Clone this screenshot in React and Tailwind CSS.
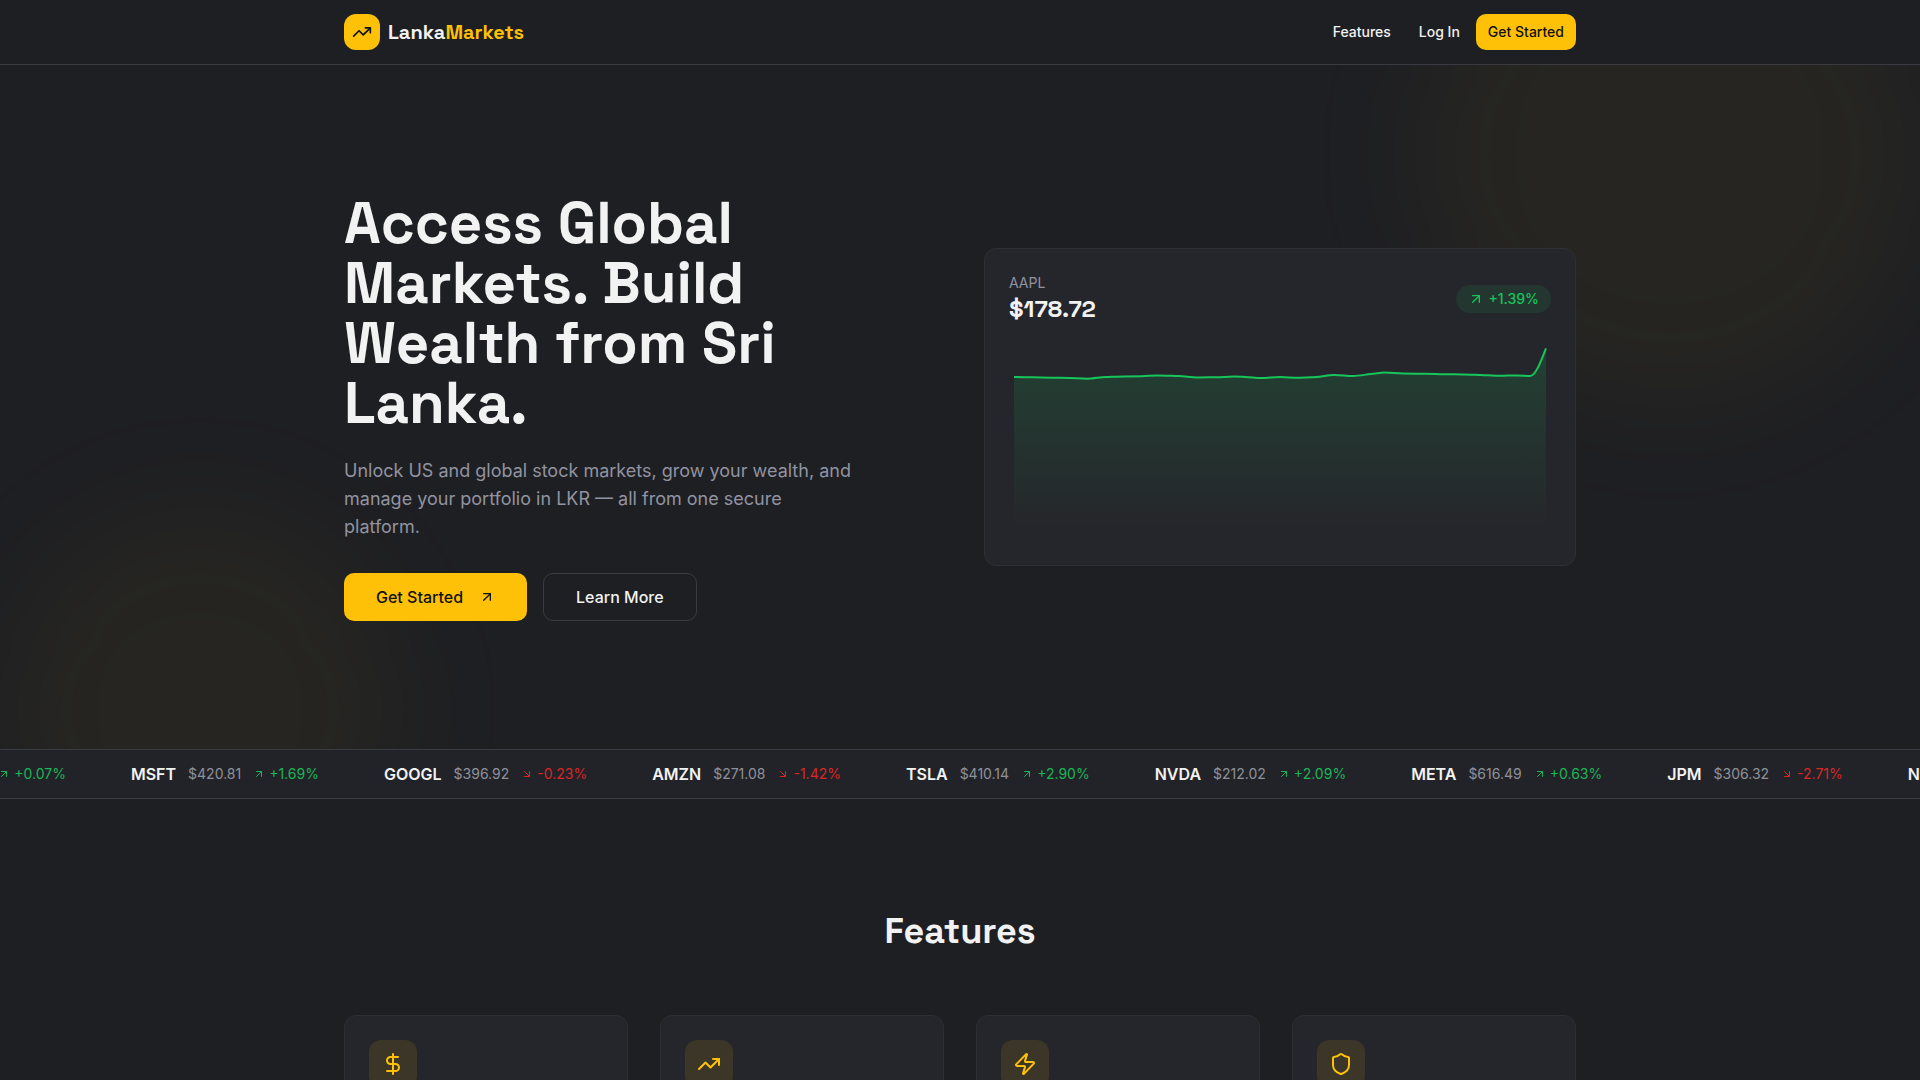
import { ArrowDownRight, ArrowUpRight, DollarSign, Shield, TrendingUp, Zap } from 'lucide-react'

const tickers = [
  { symbol: 'AAPL', price: 287.51, change: 0.07 },
  { symbol: 'MSFT', price: 420.81, change: 1.69 },
  { symbol: 'GOOGL', price: 396.92, change: -0.23 },
  { symbol: 'AMZN', price: 271.08, change: -1.42 },
  { symbol: 'TSLA', price: 410.14, change: 2.9 },
  { symbol: 'NVDA', price: 212.02, change: 2.09 },
  { symbol: 'META', price: 616.49, change: 0.63 },
  { symbol: 'JPM', price: 306.32, change: -2.71 },
  { symbol: 'NFLX', price: 88.27, change: 0.41 },
]

const features = [
  { icon: DollarSign, title: 'LKR Deposits', text: 'Fund your account in Sri Lankan Rupees.' },
  { icon: TrendingUp, title: 'Global Stocks', text: 'Trade shares from US and global markets.' },
  { icon: Zap, title: 'Fast Execution', text: 'Place orders in seconds at live prices.' },
  { icon: Shield, title: 'Secure Platform', text: 'Your assets and data stay protected.' },
]

// x, y in chart units (542 x 200)
const points = [
  [5, 36], [23, 36.3], [42, 36.7], [60, 37], [78, 37.7], [97, 36], [115, 35.4], [133, 35.2],
  [148, 34.4], [170, 35], [188, 36.4], [207, 36.2], [225, 35.6], [237, 36], [252, 37], [271, 36],
  [289, 36.8], [307, 36], [325, 34], [344, 35], [362, 33], [376, 31.6], [394, 32.6], [417, 32.7],
  [435, 33.2], [454, 33.4], [472, 34], [490, 34.8], [508, 34.4], [521, 35], [537, 7.4],
]

// Monotone cubic curve through the points
function linePath(pts) {
  const slope = (i) => (pts[i + 1][1] - pts[i][1]) / (pts[i + 1][0] - pts[i][0])
  const tangents = pts.map((_, i) => {
    if (i === 0) return 0
    if (i === pts.length - 1) return slope(i - 1) * 1.5
    const a = slope(i - 1)
    const b = slope(i)
    return a * b <= 0 ? 0 : Math.sign(a) * Math.min(Math.abs(a), Math.abs(b))
  })

  let d = `M${pts[0][0]},${pts[0][1]}`
  for (let i = 1; i < pts.length; i++) {
    const [x0, y0] = pts[i - 1]
    const [x1, y1] = pts[i]
    const dx = (x1 - x0) / 3
    d += `C${x0 + dx},${y0 + dx * tangents[i - 1]},${x1 - dx},${y1 - dx * tangents[i]},${x1},${y1}`
  }
  return d
}

function StockChart() {
  const line = linePath(points)

  return (
    <svg viewBox="0 0 542 200" preserveAspectRatio="none" className="block w-full h-[200px]">
      <defs>
        <linearGradient id="chartFill" x1="0" y1="0" x2="0" y2="1">
          <stop offset="5%" stopColor="#16c65b" stopOpacity="0.16" />
          <stop offset="95%" stopColor="#16c65b" stopOpacity="0" />
        </linearGradient>
      </defs>
      <path d={`${line}L537,195L5,195Z`} fill="url(#chartFill)" />
      <path d={line} fill="none" stroke="#16c65b" strokeWidth="2" />
    </svg>
  )
}

function TickerItem({ symbol, price, change }) {
  const up = change >= 0
  const Icon = up ? ArrowUpRight : ArrowDownRight

  return (
    <div className="flex items-center gap-3 shrink-0">
      <span className="font-semibold text-[#f2f2f2]">{symbol}</span>
      <span className="text-sm text-[#8f919a]">${price.toFixed(2)}</span>
      <span className={`flex items-center gap-1 text-sm ${up ? 'text-[#19b557]' : 'text-[#dc2626]'}`}>
        <Icon size={12} />
        {up ? '+' : ''}{change.toFixed(2)}%
      </span>
    </div>
  )
}

function App() {
  return (
    <div className="min-h-screen bg-[#1e1f23] text-[#f2f2f2] font-[Inter,sans-serif] overflow-x-hidden">
      <header className="border-b border-[#3a3b42]">
        <div className="max-w-7xl mx-auto px-6 h-16 flex items-center justify-between">
          <a href="#" className="flex items-center gap-2">
            <span className="w-9 h-9 rounded-xl bg-[#ffc107] text-[#111111] flex items-center justify-center">
              <TrendingUp size={20} />
            </span>
            <span className="text-xl font-bold font-['Space_Grotesk',Inter,sans-serif]">
              Lanka<span className="text-[#ffc107]">Markets</span>
            </span>
          </a>
          <nav className="flex items-center gap-1 text-sm font-medium">
            <a href="#features" className="px-3 py-2">Features</a>
            <a href="#login" className="px-3 py-2">Log In</a>
            <button className="h-9 px-3 rounded-[10px] bg-[#ffc107] text-[#111111] hover:bg-[#ffca2c]">
              Get Started
            </button>
          </nav>
        </div>
      </header>

      {/* Hero */}
      <section className="relative overflow-hidden">
        <div className="absolute -top-40 right-0 w-[500px] h-[500px] rounded-full bg-[#ffc107]/4 blur-3xl" />
        <div className="absolute -bottom-40 left-0 w-[400px] h-[400px] rounded-full bg-[#ffc107]/4 blur-3xl" />

        <div className="relative max-w-7xl mx-auto px-6 py-32 grid lg:grid-cols-2 gap-12 items-center">
          <div>
            <h1 className="text-[58px] leading-[60px] font-bold font-['Space_Grotesk',Inter,sans-serif]">
              Access Global Markets. Build Wealth from Sri Lanka.
            </h1>
            <p className="mt-6 max-w-lg text-lg leading-7 text-[#9193a0]">
              Unlock US and global stock markets, grow your wealth, and manage your portfolio in LKR — all
              from one secure platform.
            </p>
            <div className="mt-8 flex gap-4 font-medium">
              <button className="h-12 px-8 rounded-[10px] bg-[#ffc107] text-[#111111] flex items-center gap-4 hover:bg-[#ffca2c]">
                Get Started
                <ArrowUpRight size={16} />
              </button>
              <button className="h-12 px-8 rounded-[10px] border border-[#3a3b42] hover:bg-[#25262b]">
                Learn More
              </button>
            </div>
          </div>

          <div className="rounded-xl border border-[#2e2f35] bg-[#25262b] p-6">
            <div className="flex items-center justify-between mb-4">
              <div>
                <p className="text-sm text-[#9193a0]">AAPL</p>
                <p className="text-2xl font-bold font-['Space_Grotesk',Inter,sans-serif]">$178.72</p>
              </div>
              <div className="flex items-center gap-1 px-3 py-1 rounded-full bg-[#16c65b]/10 text-[#16c65b] text-sm font-medium">
                <ArrowUpRight size={16} />
                +1.39%
              </div>
            </div>
            <StockChart />
          </div>
        </div>
      </section>

      {/* Ticker */}
      <div className="border-y border-[#3a3b42] bg-[#222328] py-3 overflow-hidden">
        <div className="flex gap-[65px] w-max -ml-[119px]">
          {tickers.map((t) => (
            <TickerItem key={t.symbol} {...t} />
          ))}
        </div>
      </div>

      {/* Features */}
      <section id="features" className="max-w-7xl mx-auto px-6 py-28">
        <h2 className="text-4xl font-bold text-center mb-16 font-['Space_Grotesk',Inter,sans-serif]">Features</h2>
        <div className="grid md:grid-cols-2 lg:grid-cols-4 gap-8">
          {features.map(({ icon: Icon, title, text }) => (
            <div key={title} className="rounded-xl border border-[#2e2f35] bg-[#25262b] p-6">
              <div className="w-12 h-12 rounded-xl bg-[#ffc107]/10 text-[#ffc107] flex items-center justify-center mb-4">
                <Icon size={24} />
              </div>
              <h3 className="text-lg font-semibold mb-2">{title}</h3>
              <p className="text-sm text-[#9193a0]">{text}</p>
            </div>
          ))}
        </div>
      </section>
    </div>
  )
}

export default App
